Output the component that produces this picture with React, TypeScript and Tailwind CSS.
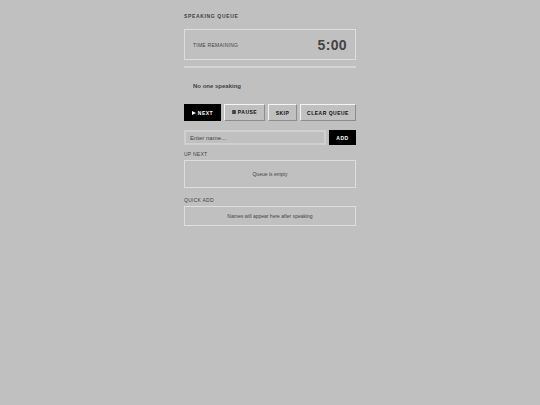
import { useState } from "react";
import type { FormEvent, ReactNode } from "react";

const baseButton = "flex items-center justify-center whitespace-nowrap text-[5px] font-bold uppercase leading-[8px] tracking-widest";
const solidButton = `${baseButton} bg-black text-white`;
const raisedButton = `${baseButton} h-[17px] border border-t-[#f4f4f4] border-l-[#f4f4f4] border-r-[#8c8c8c] border-b-[#8c8c8c] text-[#111111]`;
const sectionLabel = "text-[5px] uppercase leading-[8px] tracking-wider";

function EmptyPanel({ className, children }: { className: string; children: ReactNode }) {
  return (
    <div className={`flex items-center justify-center border border-[#dedede] text-[5px] leading-[8px] text-[#444444] ${className}`}>
      {children}
    </div>
  );
}

export default function App() {
  const [name, setName] = useState("");
  const [queue, setQueue] = useState<string[]>([]);
  const [speaker, setSpeaker] = useState<string | null>(null);
  const [paused, setPaused] = useState(false);
  const [recent, setRecent] = useState<string[]>([]);

  const advance = () => {
    if (speaker && !recent.includes(speaker)) {
      setRecent([...recent, speaker]);
    }
    setSpeaker(queue[0] ?? null);
    setQueue(queue.slice(1));
  };

  const addName = (event: FormEvent) => {
    event.preventDefault();
    if (name.trim()) {
      setQueue([...queue, name.trim()]);
      setName("");
    }
  };

  return (
    <div className="min-h-screen bg-[#c0c0c0] font-['Liberation_Sans',sans-serif] text-[#444444]">
      <main className="mx-auto w-full max-w-[172px] pt-3">
        <h1 className="text-[5px] font-bold uppercase leading-[8px] tracking-[0.13em]">Speaking Queue</h1>

        <section className="mt-[9px] flex h-[31px] items-center justify-between border border-[#dedede] px-2">
          <span className={sectionLabel}>Time Remaining</span>
          <span className="text-[14px] font-bold leading-4 tracking-wide">5:00</span>
        </section>

        <hr className="mt-[6px] h-[2px] border-0 bg-[#d4d4d4]" />

        <p className="mt-[14px] px-[9px] text-[6px] font-bold leading-[8px]">{speaker ?? "No one speaking"}</p>

        <div className="mt-[14px] flex gap-[3px]">
          <button type="button" onClick={advance} className={`${solidButton} h-[17px] w-[37px] gap-[2px]`}>
            <svg viewBox="0 0 4 4" className="size-1" fill="currentColor" aria-hidden="true">
              <path d="M0 0L4 2L0 4Z" />
            </svg>
            Next
          </button>
          <button
            type="button"
            onClick={() => setPaused(!paused)}
            aria-pressed={paused}
            className={`${raisedButton} w-[41px] gap-[2px] pb-px`}
          >
            <svg viewBox="0 0 4 4" className="size-1" fill="currentColor" aria-hidden="true">
              <path d="M0.4 0H1.7V4H0.4ZM2.3 0H3.6V4H2.3Z" />
            </svg>
            Pause
          </button>
          <button type="button" onClick={advance} className={`${raisedButton} w-[29px]`}>
            Skip
          </button>
          <button type="button" onClick={() => setQueue([])} className={`${raisedButton} flex-1`}>
            Clear Queue
          </button>
        </div>

        <form onSubmit={addName} className="mt-[9px] flex gap-[3px]">
          <input
            type="text"
            aria-label="Name"
            value={name}
            onChange={(event) => setName(event.target.value)}
            placeholder="Enter name..."
            className="h-[15px] min-w-0 flex-1 border-2 border-[#d0d0d0] px-1 text-[6px] leading-[8px] outline-none placeholder:text-[#444444]"
          />
          <button type="submit" className={`${solidButton} h-[15px] w-[27px]`}>
            Add
          </button>
        </form>

        <section className="mt-[5px]">
          <h2 className={`mb-[2px] ${sectionLabel}`}>Up Next</h2>
          <EmptyPanel className="h-[28px]">{queue.length ? queue.join(", ") : "Queue is empty"}</EmptyPanel>
        </section>

        <section className="mt-[8px]">
          <h2 className={`mb-[2px] ${sectionLabel}`}>Quick Add</h2>
          <EmptyPanel className="h-[20px]">
            {recent.length ? recent.join(", ") : "Names will appear here after speaking"}
          </EmptyPanel>
        </section>
      </main>
    </div>
  );
}
